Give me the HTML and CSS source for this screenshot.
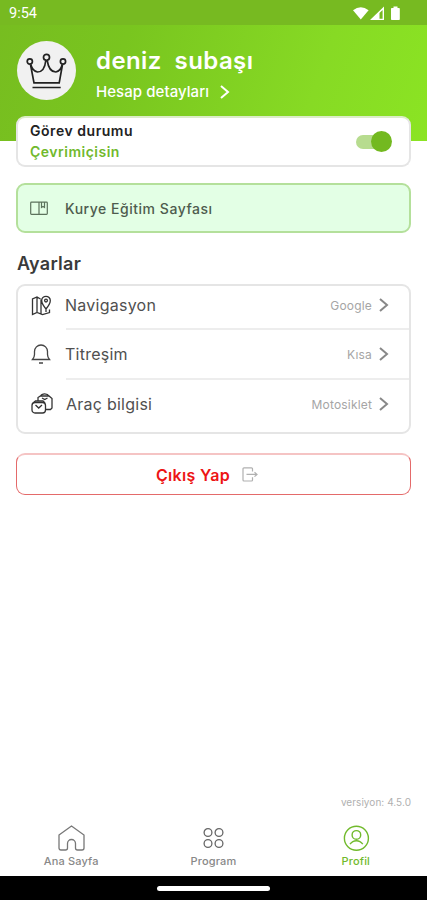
FILE: index.html
```html
<!DOCTYPE html>
<html lang="tr">
<head>
<meta charset="utf-8">
<title>Profil</title>
<link rel="stylesheet" href="styles.css">
</head>
<body>
<div class="screen">
  <div class="statusbar">
    <span class="clock">9:54</span>
    <svg class="signals" width="48" height="16" viewBox="0 0 48 16" fill="#fff">
      <path d="M0 4.2Q7.8-1.600 15.600 4.200L7.800 13.500Z"/>
      <path fill-rule="evenodd" d="M17 14L31 0.500V14ZM26.500 7V12.700H29.600V4Z"/>
      <path d="M39 2H40.500V.5H44.500V2H46Q46.800 2 46.800 2.800V13.200Q46.800 14 46 14H38.800Q38 14 38 13.200V2.800Q38 2 38.800 2Z"/>
    </svg>
  </div>
  <header class="hero">
    <div class="avatar">
      <svg width="42" height="38" viewBox="0 0 42 38" fill="none" stroke="#222" stroke-width="1.700">
        <circle cx="3.800" cy="9.500" r="2.600"/><circle cx="20.500" cy="5.300" r="3"/><circle cx="37" cy="9.500" r="2.600"/>
        <path d="M4.500 12.500L8 30.800H33.200L36.500 12.500M4.800 12.500Q6.500 19 11.500 20Q18.500 20 19.800 8.500M21.200 8.500Q23 20 29.800 20Q34.800 19 36.200 12.500M6.500 35.500H34.700"/>
      </svg>
    </div>
    <div class="who">
      <div class="name">deniz  subaşı</div>
      <div class="details"><span>Hesap detayları</span>
        <svg width="10" height="14" viewBox="0 0 10 14" fill="none" stroke="#fff" stroke-width="2"><path d="M1 1L8 7L1 13"/></svg>
      </div>
    </div>
  </header>
  <main class="content">
    <section class="card duty">
      <div>
        <div class="duty-title">Görev durumu</div>
        <div class="duty-state">Çevrimiçisin</div>
      </div>
      <div class="switch"><span class="knob"></span></div>
    </section>
    <section class="training">
      <svg width="18" height="15" viewBox="0 0 18 15" fill="none" stroke="#5c725c" stroke-width="1.200">
        <path d="M1.500 1.200H16.500Q17.300 1.200 17.300 2V12.500Q17.300 13.300 16.500 13.300H1.500Q.7 13.300 .7 12.500V2Q.7 1.200 1.500 1.200ZM9 1.200V14M11.500 1.500V6.500L13 5.500L14.500 6.500V1.500"/>
      </svg>
      <span>Kurye Eğitim Sayfası</span>
    </section>
    <h2 class="heading">Ayarlar</h2>
    <section class="card settings">
      <div class="row first">
        <svg class="icon" width="22" height="22" viewBox="0 0 22 22" fill="none" stroke="#333" stroke-width="1.300">
          <path d="M10.500 4L7 2L2.500 4V19.500L7 17.500L12.500 19.500L19.500 17.500V14.500M7 2V17.500M11 4.500V18.500M16 14Q11.700 9 11.700 5.600A4.300 4.300 0 0 1 20.300 5.600Q20.300 9 16 14ZM16 14V17"/><circle cx="16" cy="5.600" r="1.400"/>
        </svg>
        <div class="line"><span class="label nav-label">Navigasyon</span><span class="value">Google</span>
          <svg class="chev" width="10" height="14" viewBox="0 0 10 14"><path d="M1 1L8 7L1 13"/></svg></div>
      </div>
      <div class="row">
        <svg class="icon" width="22" height="22" viewBox="0 0 22 22" fill="none" stroke="#444" stroke-width="1.300">
          <path d="M2.500 16.500H19.500Q17.500 14 17.500 11.500V8.500A6.500 6.500 0 0 0 4.500 8.500V11.500Q4.500 14 2.500 16.500ZM9 20H13"/>
        </svg>
        <div class="line"><span class="label vib-label">Titreşim</span><span class="value">Kısa</span>
          <svg class="chev" width="10" height="14" viewBox="0 0 10 14"><path d="M1 1L8 7L1 13"/></svg></div>
      </div>
      <div class="row last">
        <svg class="icon" width="22" height="22" viewBox="0 0 22 22" fill="none" stroke="#333" stroke-width="1.300">
          <rect x="2" y="9.500" width="13.500" height="10.500" rx="3"/><path d="M3 10L5.500 8H13L15 10M5.500 12L8.700 15L12 12M8 8V4.500L10.500 3H19L22 5.500V15L20.500 16.500H16M10.500 3Q11.500 .8 14.700 .8T19 3M12 5L14.700 6.500L17.500 5"/>
        </svg>
        <div class="line"><span class="label car-label">Araç bilgisi</span><span class="value">Motosiklet</span>
          <svg class="chev" width="10" height="14" viewBox="0 0 10 14"><path d="M1 1L8 7L1 13"/></svg></div>
      </div>
    </section>
    <div class="logout">
      <span>Çıkış Yap</span>
      <svg width="16" height="15" viewBox="0 0 16 15" fill="none" stroke="#b0b0b0" stroke-width="1.200"><path d="M10.500 4.500V1.800Q10.500 .8 9.500 .8H2Q1 .8 1 1.800V13Q1 14 2 14H9.500Q10.500 14 10.500 13V10.300M4.500 7.400H14M12.500 5.200L15 7.400L12.500 9.600"/></svg>
    </div>
    <div class="version">versiyon: 4.5.0</div>
  </main>
  <nav class="tabs">
    <div class="tab">
      <svg width="28" height="28" viewBox="0 0 28 28" fill="none" stroke="#777" stroke-width="1.300"><path d="M2 11L14.500 2L27 11V24Q27 26 25 26H20.500Q18.500 26 18.500 24V19.500A4 4 0 0 0 10.500 19.500V24Q10.500 26 8.500 26H4Q2 26 2 24Z"/></svg>
      <span>Ana Sayfa</span>
    </div>
    <div class="tab">
      <svg width="28" height="28" viewBox="0 0 28 28" fill="none" stroke="#666" stroke-width="1.300"><circle cx="9" cy="8.500" r="3.900"/><circle cx="20" cy="8.500" r="3.900"/><circle cx="9" cy="19.500" r="3.900"/><circle cx="20" cy="19.500" r="3.900"/></svg>
      <span>Program</span>
    </div>
    <div class="tab active">
      <svg width="28" height="28" viewBox="0 0 28 28" fill="none" stroke="#71ba2c" stroke-width="1.400"><circle cx="14.400" cy="14.200" r="12"/><circle cx="14.400" cy="10.900" r="4.300"/><path d="M8 20.200Q10.500 16.700 14.400 16.700T20.800 20.200"/></svg>
      <span>Profil</span>
    </div>
  </nav>
  <div class="homebar"><span></span></div>
</div>
</body>
</html>
```

FILE: styles.css
```css
* { box-sizing: border-box; }
body { margin: 0; font-family: Inter, "Liberation Sans", sans-serif; background: #fff; }
svg { display: block; flex: none; }
.screen { width: 427px; height: 900px; display: flex; flex-direction: column; overflow: hidden; }
.statusbar { height: 25px; flex: none; background: #77ba21; display: flex; justify-content: space-between; align-items: center; padding: 2px 26px 0 9px; }
.clock { font: 400 14.500px/16px Roboto, sans-serif; color: #fff; }
.hero { height: 116px; flex: none; display: flex; padding: 16px 17px 0; gap: 20px; background: linear-gradient(110deg, #77bd20 0%, #79c51f 28%, #87da24 72%, #8be423 100%); color: #fff; }
.avatar { width: 59px; height: 59px; border-radius: 50%; background: #f1f1f1; display: flex; align-items: center; justify-content: center; }
.name { margin-top: 5px; font-size: 24px; line-height: 30px; font-weight: 600; letter-spacing: .4px; white-space: pre; }
.details { display: flex; align-items: center; gap: 11px; margin-top: 7px; font-size: 15px; line-height: 18px; font-weight: 500; letter-spacing: .06px; }
.content { flex: 1; padding: 0 16px; display: flex; flex-direction: column; margin-top: -25px; }
.card { background: #fff; border: 2px solid #e5e5e5; border-radius: 9px; }
.duty { height: 51px; display: flex; align-items: center; justify-content: space-between; padding: 0 17px 0 12px; border-top-color: #dcecc8; }
.duty-title, .duty-state { margin-top: -1px; font-size: 14px; line-height: 21px; font-weight: 600; letter-spacing: .54px; color: #222; }
.duty-state { margin-top: 0; color: #71b92c; letter-spacing: .5px; }
.switch { width: 36px; height: 21px; position: relative; }
.switch::before { content: ""; position: absolute; left: 0; top: 3.500px; width: 30px; height: 14px; border-radius: 7px; background: #b7dc8f; }
.knob { position: absolute; right: 0; top: 0; width: 21px; height: 21px; border-radius: 50%; background: #73b920; }
.training { margin-top: 16px; height: 50px; border: 2px solid #b4e09b; border-radius: 9px; background: #e3ffe5; display: flex; align-items: center; gap: 17px; padding-left: 12px; font-size: 14px; font-weight: 500; letter-spacing: .52px; color: #4e5c4e; }
.heading { margin: 19px 0 0 1px; font-size: 18px; line-height: 24px; font-weight: 600; letter-spacing: .25px; color: #3a3a3a; }
.settings { margin-top: 8px; height: 150px; padding-left: 12px; }
.row { display: flex; height: 50px; gap: 14px; align-items: center; }
.first { height: 44px; }
.last { height: 51px; }
.icon { width: 22px; margin-top: -2px; overflow: visible; }
.first .icon { margin-top: -5px; }
.last .icon { margin-top: -4px; }
.line { flex: 1; align-self: stretch; display: flex; align-items: center; border-bottom: 2px solid #ededed; padding-right: 20px; }
.first .line { padding-bottom: 4px; }
.last .line { border: 0; padding-bottom: 3px; }
.label { flex: 1; font-size: 16px; color: #505050; letter-spacing: .25px; }
.nav-label, .vib-label { margin-left: -1px; }
.value { font-size: 12px; color: #a5a5a5; margin-right: 7px; letter-spacing: .17px; }
.chev { fill: none; stroke: #888; stroke-width: 2; }
.logout { margin-top: 19px; height: 42px; border: 1px solid #e46a6a; border-top: 2px solid #f5c4c4; border-radius: 9px; display: flex; align-items: center; justify-content: center; gap: 12px; color: #ed1515; font-size: 16px; font-weight: 600; letter-spacing: .32px; padding-right: 13px; }
.version { margin-top: auto; margin-bottom: 13px; text-align: right; font-size: 10px; line-height: 12px; color: #b0b0b0; letter-spacing: .05px; }
.tabs { height: 55px; flex: none; display: flex; }
.tab { flex: 1; display: flex; flex-direction: column; align-items: center; padding-top: 3px; font-size: 11px; line-height: 14px; font-weight: 500; color: #888; letter-spacing: .15px; }
.tab span { margin-top: 2px; }
.tab.active { color: #71ba2c; }
.homebar { height: 24px; flex: none; background: #000; display: flex; align-items: center; justify-content: center; }
.homebar span { width: 113px; height: 5px; border-radius: 3px; background: #fff; }
```
